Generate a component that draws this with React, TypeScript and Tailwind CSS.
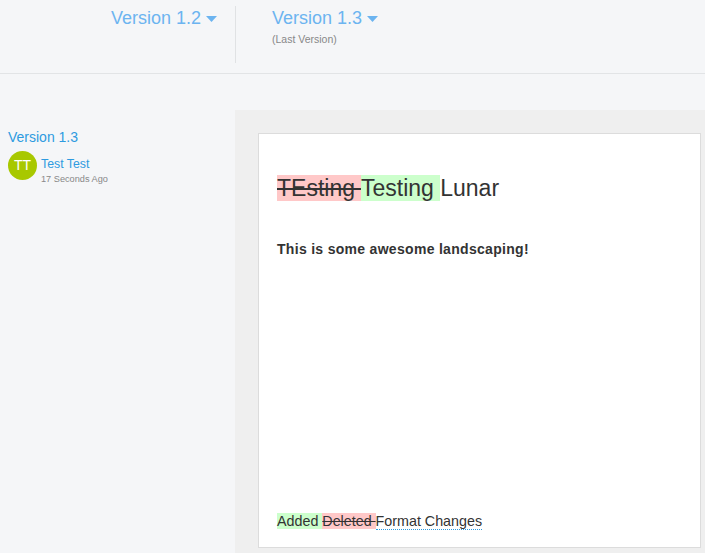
export default function App() {
  const f = { fontFamily: '"Liberation Sans", Arial, sans-serif' };
  const Arrow = () => (
    <svg width="11" height="7" viewBox="0 0 11 7" className="ml-[5px] mt-[2px]"><path d="M0 0h11L5.5 6z" fill="#6cb4f0" /></svg>
  );
  return (
    <div style={f} className="w-[705px] h-[553px] bg-[#f5f6f8] overflow-hidden flex flex-col">
      <div className="h-[74px] border-b border-[#e2e4e6] flex shrink-0">
        <div className="w-[235px] flex justify-end pr-[18px] pt-[6px]">
          <div className="flex items-center h-[24px] text-[18px] text-[#6cb4f0]">Version 1.2<Arrow /></div>
        </div>
        <div className="w-px bg-[#e0e2e4] mt-[6px] h-[57px]" />
        <div className="pl-[36px] pt-[6px]">
          <div className="flex items-center h-[24px] text-[18px] text-[#6cb4f0]">Version 1.3<Arrow /></div>
          <div className="text-[10.5px] text-[#888] mt-[2px]">(Last Version)</div>
        </div>
      </div>
      <div className="flex flex-1">
        <div className="w-[235px] pl-[8px] pt-[55px]">
          <div className="text-[14px] text-[#2e9be0] leading-[16px]">Version 1.3</div>
          <div className="flex mt-[6px]">
            <div className="w-[29px] h-[29px] rounded-full bg-[#a8c800] text-white text-[14px] flex items-center justify-center">TT</div>
            <div className="ml-[4px] mt-[6px]">
              <div className="text-[12.3px] text-[#2e9be0] leading-[14px]">Test Test</div>
              <div className="text-[9.2px] text-[#888] mt-[3px] leading-[11px]">17 Seconds Ago</div>
            </div>
          </div>
        </div>
        <div className="flex-1 mt-[36px] bg-[#efefef] pl-[23px] pt-[23px] pr-[4px] pb-[5px] flex">
          <div className="flex-1 bg-white border border-[#dcdcdc] px-[18px] pt-[40px] flex flex-col text-[#333]">
            <div className="text-[23px] leading-[28px]">
              <span className="bg-[#ffc8c8] line-through">TEsting </span>
              <span className="bg-[#ccffcc]">Testing </span>Lunar
            </div>
            <div className="mt-[37px] text-[14px] font-bold tracking-[0.3px]">This is some awesome landscaping!</div>
            <div className="mt-auto mb-[18px] text-[14.3px] leading-[16px]">
              <span className="bg-[#ccffcc]">Added </span>
              <span className="bg-[#ffc8c8] line-through">Deleted </span>
              <span className="border-b border-dotted border-[#2e9be0]">Format Changes</span>
            </div>
          </div>
        </div>
      </div>
    </div>
  );
}
